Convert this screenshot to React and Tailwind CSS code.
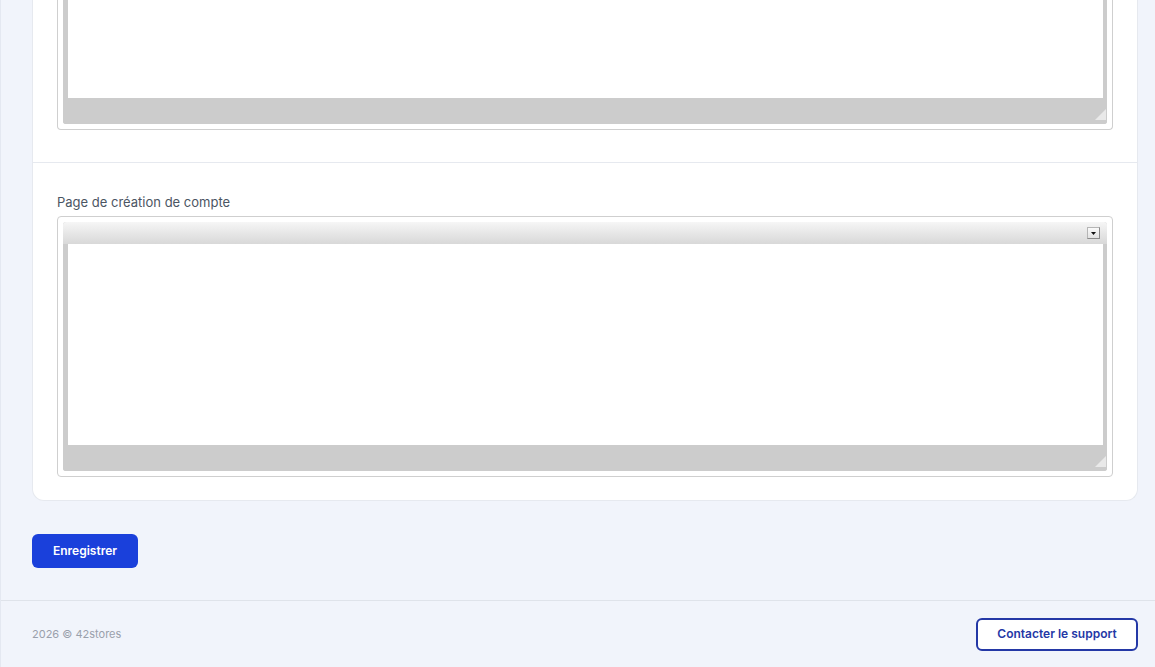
import React from "react";

function Grip() {
  return (
    <svg width="11" height="11" viewBox="0 0 11 11" className="block">
      <polygon points="11,0 11,11 0,11" fill="#e9e9e9" />
    </svg>
  );
}

function BottomBar() {
  return (
    <div className="h-[26px] bg-[#cccccc] flex items-end justify-end pr-[1px] pb-[4px]">
      <Grip />
    </div>
  );
}

function Editor() {
  return (
    <div className="border border-[#cfcfcf] rounded-[4px] p-[5px] bg-white">
      <div className="bg-[#cccccc] rounded-[3px] overflow-hidden">
        <div className="h-[22px] bg-gradient-to-b from-[#f6f6f6] to-[#d8d8d8] flex items-center justify-end pr-[7px]">
          <div className="w-[13px] h-[12px] border border-[#8a8a8a] border-t-[#b5b5b5] border-l-[#b5b5b5] bg-gradient-to-b from-[#fafafa] to-[#e2e2e2] flex items-center justify-center">
            <svg width="5" height="3" viewBox="0 0 5 3" className="block">
              <polygon points="0,0 5,0 2.5,3" fill="#111" />
            </svg>
          </div>
        </div>
        <div className="pl-[5px] pr-[4px]">
          <div className="h-[201px] bg-white" />
        </div>
        <BottomBar />
      </div>
    </div>
  );
}

export default function App() {
  return (
    <div
      className="min-h-screen bg-[#f1f4fb] border-l border-[#e4e8f1] flex flex-col"
      style={{ fontFamily: "Inter, 'Noto Sans', sans-serif" }}
    >
      <main className="pl-[31px] pr-[17px] h-[600px]">
        <div className="bg-white border border-t-0 border-[#e6e9ef] rounded-b-xl">
          <section className="px-6 pb-[32px]">
            <div className="border border-t-0 border-[#cfcfcf] rounded-b-[4px] px-[5px] pb-[5px]">
              <div className="bg-[#cccccc] rounded-b-[3px] overflow-hidden">
                <div className="pl-[5px] pr-[4px]">
                  <div className="h-[98px] bg-white" />
                </div>
                <BottomBar />
              </div>
            </div>
          </section>
          <section className="border-t border-[#e6e9ef] px-6 pt-[30px] pb-[23px]">
            <label className="block text-[13px] leading-[18px] text-[#4b5563] mb-[5px]">
              Page de création de compte
            </label>
            <Editor />
          </section>
        </div>
        <button className="mt-[33px] h-[34px] w-[106px] rounded-[6px] bg-[#1a40db] text-white text-[12px] font-semibold flex items-center justify-center">
          Enregistrer
        </button>
      </main>
      <footer className="border-t border-[#dfe3ea] h-[67px] pl-[31px] pr-[17px] flex items-center justify-between">
        <span className="text-[11px] text-[#9aa0ab]">2026 © 42stores</span>
        <button className="h-[33px] w-[162px] rounded-[6px] border-2 border-[#2438a6] text-[#2438a6] text-[12px] font-semibold bg-white flex items-center justify-center">
          Contacter le support
        </button>
      </footer>
    </div>
  );
}
